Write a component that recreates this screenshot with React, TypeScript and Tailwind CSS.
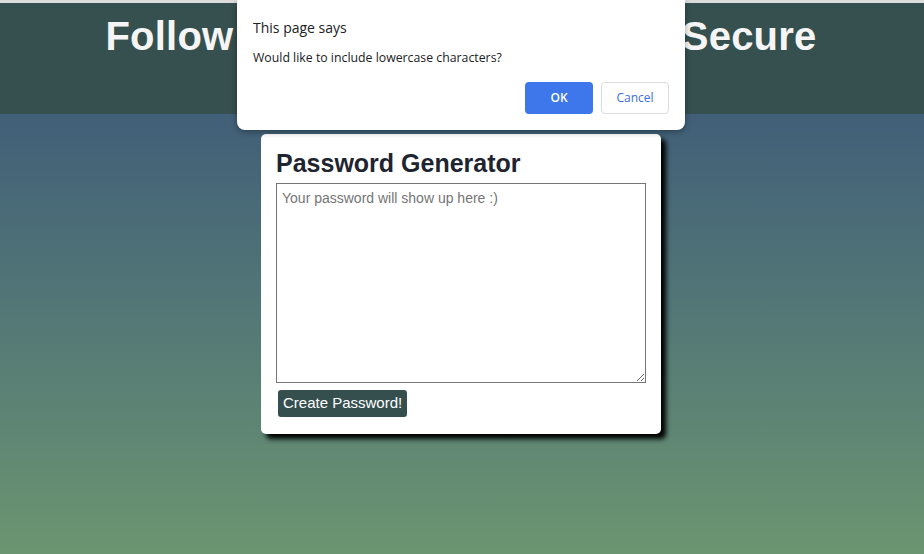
import React from "react";

function AlertDialog() {
    return (
        <div className="absolute left-[237px] top-0 h-[130px] w-[448px] rounded-b-[8px] bg-white px-[16px] pt-[18px] font-['Open_Sans',sans-serif] shadow-[0_2px_6px_rgba(0,0,0,0.35)]">
            <div className="text-[14px] leading-[20px] text-[#202124]">This page says</div>
            <div className="mt-[12px] text-[12.3px] leading-[16px] text-[#202124]">
                Would like to include lowercase characters?
            </div>
            <div className="mt-[16px] flex justify-end gap-[8px]">
                <button className="h-[32px] w-[68px] rounded-[4px] bg-[#3e76ec] text-[12px] font-semibold text-white">
                    OK
                </button>
                <button className="h-[32px] w-[68px] rounded-[4px] border border-[#dadce0] bg-white text-[12px] text-[#3b6fe0]">
                    Cancel
                </button>
            </div>
        </div>
    );
}

function PasswordCard() {
    return (
        <div className="mx-auto w-[400px] rounded-[5px] bg-white px-[15px] pb-[17px] pt-[15px] shadow-[5px_5px_5px_#000]">
            <h2 className="text-[25px] font-bold leading-[29px] text-[#1e2430]">Password Generator</h2>
            <textarea
                readOnly
                placeholder="Your password will show up here :)"
                className="mt-[5px] block h-[200px] w-[370px] resize-y border border-[#767676] px-[5px] py-[4px] text-[14px] placeholder:text-[#757575]"
            />
            <button className="ml-[2px] mt-[7px] h-[27px] rounded-[3px] bg-[#344f4e] px-[5px] text-[15px] text-white">
                Create Password!
            </button>
        </div>
    );
}

export default function App() {
    return (
        <div className="relative flex h-[554px] w-full flex-col overflow-hidden font-['Liberation_Sans',Arial,sans-serif]">
            <div className="h-[3px] bg-[#dcdcdc]" />
            <header className="h-[111px] bg-[#36504f] pr-[2px] pt-[10px]">
                <h1 className="text-center text-[40px] font-bold leading-[46px] tracking-[0.23px] text-[#f5f5f5]">
                    Follow the Steps to Keep You Secure
                </h1>
            </header>
            <main className="flex-1 bg-gradient-to-b from-[#415f78] to-[#6b9570] pr-[2px] pt-[20px]">
                <PasswordCard />
            </main>
            <AlertDialog />
        </div>
    );
}
